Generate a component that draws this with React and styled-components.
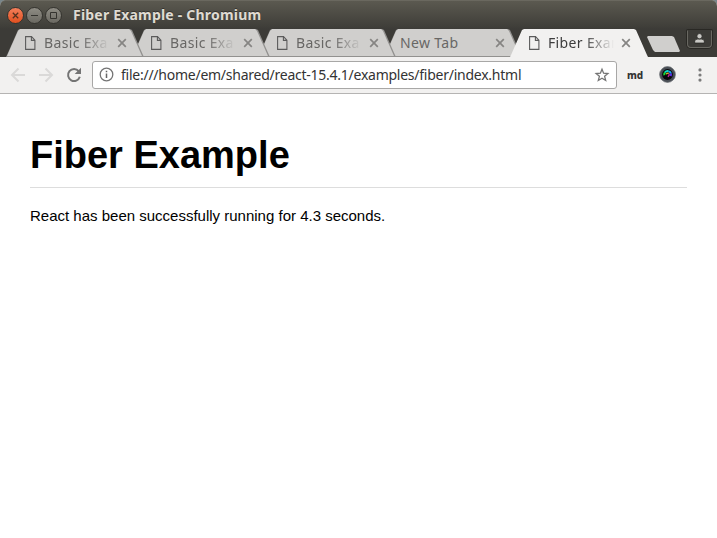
import React from "react";
import styled, { createGlobalStyle, css } from "styled-components";

const GlobalStyle = createGlobalStyle`
  * { box-sizing: border-box; }
  html, body { margin: 0; height: 100%; overflow: hidden; background: #fff; }
`;

const uiFont = '"Noto Sans", "Open Sans", sans-serif';

const Window = styled.div`
  display: flex;
  flex-direction: column;
  width: 100%;
  height: 100vh;
  font-family: ${uiFont};
`;

const Frame = styled.header`
  height: 57px;
  background: linear-gradient(#5c5a51 0, #5a584f 2px, #3f3e39 27px, #3c3b37 29px);
  border-radius: 6px 6px 0 0;
  box-shadow: 0 -6px 0 6px #78858a;
  clip-path: inset(0);
`;

const TitleBar = styled.div`
  display: flex;
  align-items: center;
  height: 29px;
  padding-left: 7px;
  border-top: 1px solid #6a685f;
  border-radius: 6px 6px 0 0;
`;

const WindowButton = styled.button`
  display: grid;
  place-items: center;
  width: 17px;
  height: 17px;
  margin: 0 2px 0 0;
  padding: 0;
  border: 1px solid #35342f;
  border-radius: 50%;
  background: ${(p) => (p.$close ? "linear-gradient(#f37f5b, #e2501f)" : "linear-gradient(#8e8c84, #6b6962)")};
  svg { display: block; }
`;

const WindowTitle = styled.div`
  margin-left: 9px;
  color: #dfdbd2;
  font-size: 14px;
  font-weight: 700;
  line-height: 20px;
  letter-spacing: 0.2px;
  white-space: nowrap;
  text-shadow: 0 -1px #33322e;
`;

const TabRow = styled.div`
  display: flex;
  height: 28px;
  padding-left: 6px;
`;

const Tab = styled.div`
  position: relative;
  z-index: ${(p) => p.$level};
  display: flex;
  align-items: center;
  flex: none;
  width: 138px;
  height: 28px;
  margin-right: -12px;
  padding: 0 16px 0 ${(p) => (p.$plain ? 16 : 19)}px;
  color: ${(p) => (p.$active ? "#3d3d3d" : "#686765")};
  background: ${(p) => (p.$active ? "#f2f1f0" : "#92918f")};
  clip-path: polygon(0 28px, 1px 26px, 12px 1px, 14px 0, 124px 0, 126px 1px, 137px 26px, 138px 28px);
  ${(p) =>
    !p.$active &&
    css`
      &::before {
        content: "";
        position: absolute;
        inset: 0;
        background: #d0cfcd;
        clip-path: polygon(1px 27px, 12px 2px, 14px 0, 123px 0, 125px 2px, 136px 27px);
      }
    `}
  > * { position: relative; }
`;

const TabTitle = styled.span`
  flex: none;
  width: ${(p) => (p.$plain ? 92 : 67)}px;
  margin-left: ${(p) => (p.$plain ? 0 : 8)}px;
  overflow: hidden;
  white-space: nowrap;
  font-size: 14px;
  line-height: 20px;
  letter-spacing: 0.35px;
  ${(p) => !p.$plain && css`mask-image: linear-gradient(90deg, #000 36px, transparent 66px);`}
`;

const TabClose = styled.button`
  display: grid;
  place-items: center;
  width: 11px;
  height: 11px;
  margin-left: ${(p) => (p.$plain ? 2 : 5)}px;
  padding: 0;
  border: 0;
  background: none;
  color: #868583;
`;

const NewTabButton = styled.button`
  width: 34px;
  height: 16px;
  margin: 7px 0 0 14px;
  padding: 0;
  border: 0;
  background: #d0cfcd;
  transform: translateX(-3px);
  clip-path: polygon(1px 0, 25px 0, 27px 1px, 33px 15px, 32px 16px, 8px 16px, 6px 14px, 0 1px);
`;

const ProfileButton = styled.button`
  display: grid;
  place-items: center;
  width: 25px;
  height: 18px;
  margin: 1px 5px 0 auto;
  padding: 0 1px 2px 0;
  border: 1px solid #696862;
  border-top-color: #3c3b37;
  border-radius: 1px 1px 4px 4px;
  background: #3c3b37;
  box-shadow: 0 0 0 1px #292824;
`;

const Toolbar = styled.nav`
  display: flex;
  align-items: center;
  height: 37px;
  padding: 0 8px 1px 10px;
  background: #f2f1f0;
  border-bottom: 1px solid #b5b4b3;
  > svg { flex: none; display: block; }
`;

const AddressBar = styled.div`
  display: flex;
  align-items: center;
  width: 525px;
  height: 28px;
  margin-left: 10px;
  padding: 0 6px;
  background: #fff;
  border: 1px solid #a8a7a6;
  border-radius: 3px;
`;

const Url = styled.span`
  flex: 1;
  margin-left: 7px;
  color: #333;
  font-size: 14px;
  line-height: 20px;
  letter-spacing: -0.25px;
  white-space: nowrap;
`;

const Markdown = styled.span`
  width: 15px;
  margin: 0 17px 0 10px;
  color: #333;
  font-size: 10px;
  font-weight: 800;
  line-height: 14px;
  letter-spacing: -0.2px;
`;

const Page = styled.main`
  flex: 1;
  padding: 0 30px;
  background: #fff;
  color: #000;
  font-family: "Liberation Sans", Arial, sans-serif;
`;

const Heading = styled.h1`
  height: 94px;
  margin: 0 0 18px;
  padding-top: 39px;
  border-bottom: 1px solid #ddd;
  font-size: 38px;
  line-height: 44px;
`;

const Paragraph = styled.p`
  margin: 0;
  font-size: 15px;
  line-height: 20px;
`;

const Gap = styled.span`
  flex: none;
  width: ${(p) => p.$w}px;
`;

const DocIcon = () => (
  <svg width="11" height="14" viewBox="0 0 11 14" fill="none" stroke="#5b5b5b" strokeWidth="1.1">
    <path d="M.6.6h5.900l3.400 3.600v9.200H.6zM6.400.8v3.600h3.500" />
  </svg>
);

const Cross = () => (
  <svg width="10" height="10" viewBox="0 0 10 10" fill="none" stroke="currentColor" strokeWidth="1.700">
    <path d="M1.200 1.200l7.600 7.600M8.800 1.200L1.200 8.800" />
  </svg>
);

const Arrow = ({ forward }) => (
  <svg width="16" height="16" viewBox="0 0 16 16" fill="none" stroke="#dad9d8" strokeWidth="2">
    <path d={forward ? "M1 8h12M7.5 1.5L14 8l-6.5 6.5" : "M15 8H3M8.5 1.5L2 8l6.5 6.500"} />
  </svg>
);

const Reload = () => (
  <svg width="16" height="16" viewBox="0 0 16 16">
    <path d="M12.700 4.200A6 6 0 1 0 13.800 9.800" fill="none" stroke="#747474" strokeWidth="2" />
    <path d="M15 .8v6.300H8.700z" fill="#747474" />
  </svg>
);

const Info = () => (
  <svg width="15" height="15" viewBox="0 0 15 15">
    <circle cx="7.500" cy="7.500" r="6.300" fill="none" stroke="#747474" strokeWidth="1.300" />
    <path d="M6.750 6.500h1.500V11h-1.500zM6.750 3.800h1.500v1.500h-1.500z" fill="#666" />
  </svg>
);

const Star = () => (
  <svg width="16" height="16" viewBox="0 0 16 16" fill="none" stroke="#747474" strokeWidth="1.300">
    <path d="M8 2.300l1.600 3.900 4.300.3-3.300 2.800 1.100 4.200L8 11.300l-3.700 2.200 1.100-4.200-3.300-2.800 4.300-.3z" />
  </svg>
);

const Lens = () => (
  <svg width="17" height="17" viewBox="0 0 17 17">
    <circle cx="8.500" cy="8.500" r="7.900" fill="#484d54" stroke="#6d7176" strokeWidth=".7" />
    <circle cx="8.500" cy="8.500" r="5.400" fill="#08080c" />
    <g fill="none" strokeWidth="2">
      <path d="M5.300 9.300a3.500 3.500 0 0 1 .7-3" stroke="#18d936" />
      <path d="M6 6.300a3.500 3.500 0 0 1 3.300-1.200" stroke="#08dcc5" />
      <path d="M9.300 5.100a3.500 3.500 0 0 1 2.600 2.500" stroke="#16a9ed" />
      <path d="M11.900 7.600a3.500 3.500 0 0 1-.3 2.500" stroke="#5b30e8" />
    </g>
    <path d="M7.200 8.300a2 2 0 0 1 2.600-1" fill="none" stroke="#e3c51d" strokeWidth="1.300" />
    <path d="M9.800 7.500q1.200 1.800-1 3.100" fill="none" stroke="#d724ae" strokeWidth="1.300" />
  </svg>
);

const More = () => (
  <svg width="4" height="14" viewBox="0 0 4 14" fill="#7b7b7b">
    <circle cx="2" cy="1.900" r="1.600" />
    <circle cx="2" cy="7" r="1.600" />
    <circle cx="2" cy="12.100" r="1.600" />
  </svg>
);

const Person = () => (
  <svg width="11" height="11" viewBox="0 0 11 11" fill="#cac9c5" stroke="#20201d" strokeWidth=".7">
    <path d="M.7 10V8.100Q.7 6.300 3.600 6.100h3.800q2.900.2 2.900 2V10z" />
    <circle cx="5.500" cy="3.200" r="2.600" />
  </svg>
);

const tabs = ["Basic Exa", "Basic Exa", "Basic Exa", "New Tab", "Fiber Exam"];

export default function App() {
  return (
    <Window>
      <GlobalStyle />
      <Frame>
        <TitleBar>
          <WindowButton $close aria-label="Close">
            <svg width="7" height="7" viewBox="0 0 7 7" stroke="#54311f" strokeWidth="1.300"><path d="M.8.8l5.400 5.400M6.200.8L.8 6.200" /></svg>
          </WindowButton>
          <WindowButton aria-label="Minimize">
            <svg width="7" height="7" viewBox="0 0 7 7" stroke="#34332f" strokeWidth="1"><path d="M0 3.500h7" /></svg>
          </WindowButton>
          <WindowButton aria-label="Maximize">
            <svg width="7" height="7" viewBox="0 0 7 7" fill="none" stroke="#34332f" strokeWidth="1"><path d="M.5.5h6v6h-6z" /></svg>
          </WindowButton>
          <WindowTitle>Fiber Example - Chromium</WindowTitle>
        </TitleBar>
        <TabRow>
          {tabs.map((title, i) => {
            const active = i === 4;
            const plain = i === 3;
            return (
              <Tab key={i} $active={active} $plain={plain} $level={active ? 9 : 5 - i}>
                {!plain && <DocIcon />}
                <TabTitle $plain={plain}>{title}</TabTitle>
                <TabClose $plain={plain} aria-label="Close tab"><Cross /></TabClose>
              </Tab>
            );
          })}
          <NewTabButton aria-label="New tab" />
          <ProfileButton aria-label="Profile"><Person /></ProfileButton>
        </TabRow>
      </Frame>
      <Toolbar>
        <Arrow />
        <Gap $w={12} />
        <Arrow forward />
        <Gap $w={12} />
        <Reload />
        <AddressBar>
          <Info />
          <Url>file:///home/em/shared/react-15.4.1/examples/fiber/index.html</Url>
          <Star />
        </AddressBar>
        <Markdown>md</Markdown>
        <Lens />
        <Gap $w={22} />
        <More />
      </Toolbar>
      <Page>
        <Heading>Fiber Example</Heading>
        <Paragraph>React has been successfully running for 4.3 seconds.</Paragraph>
      </Page>
    </Window>
  );
}
